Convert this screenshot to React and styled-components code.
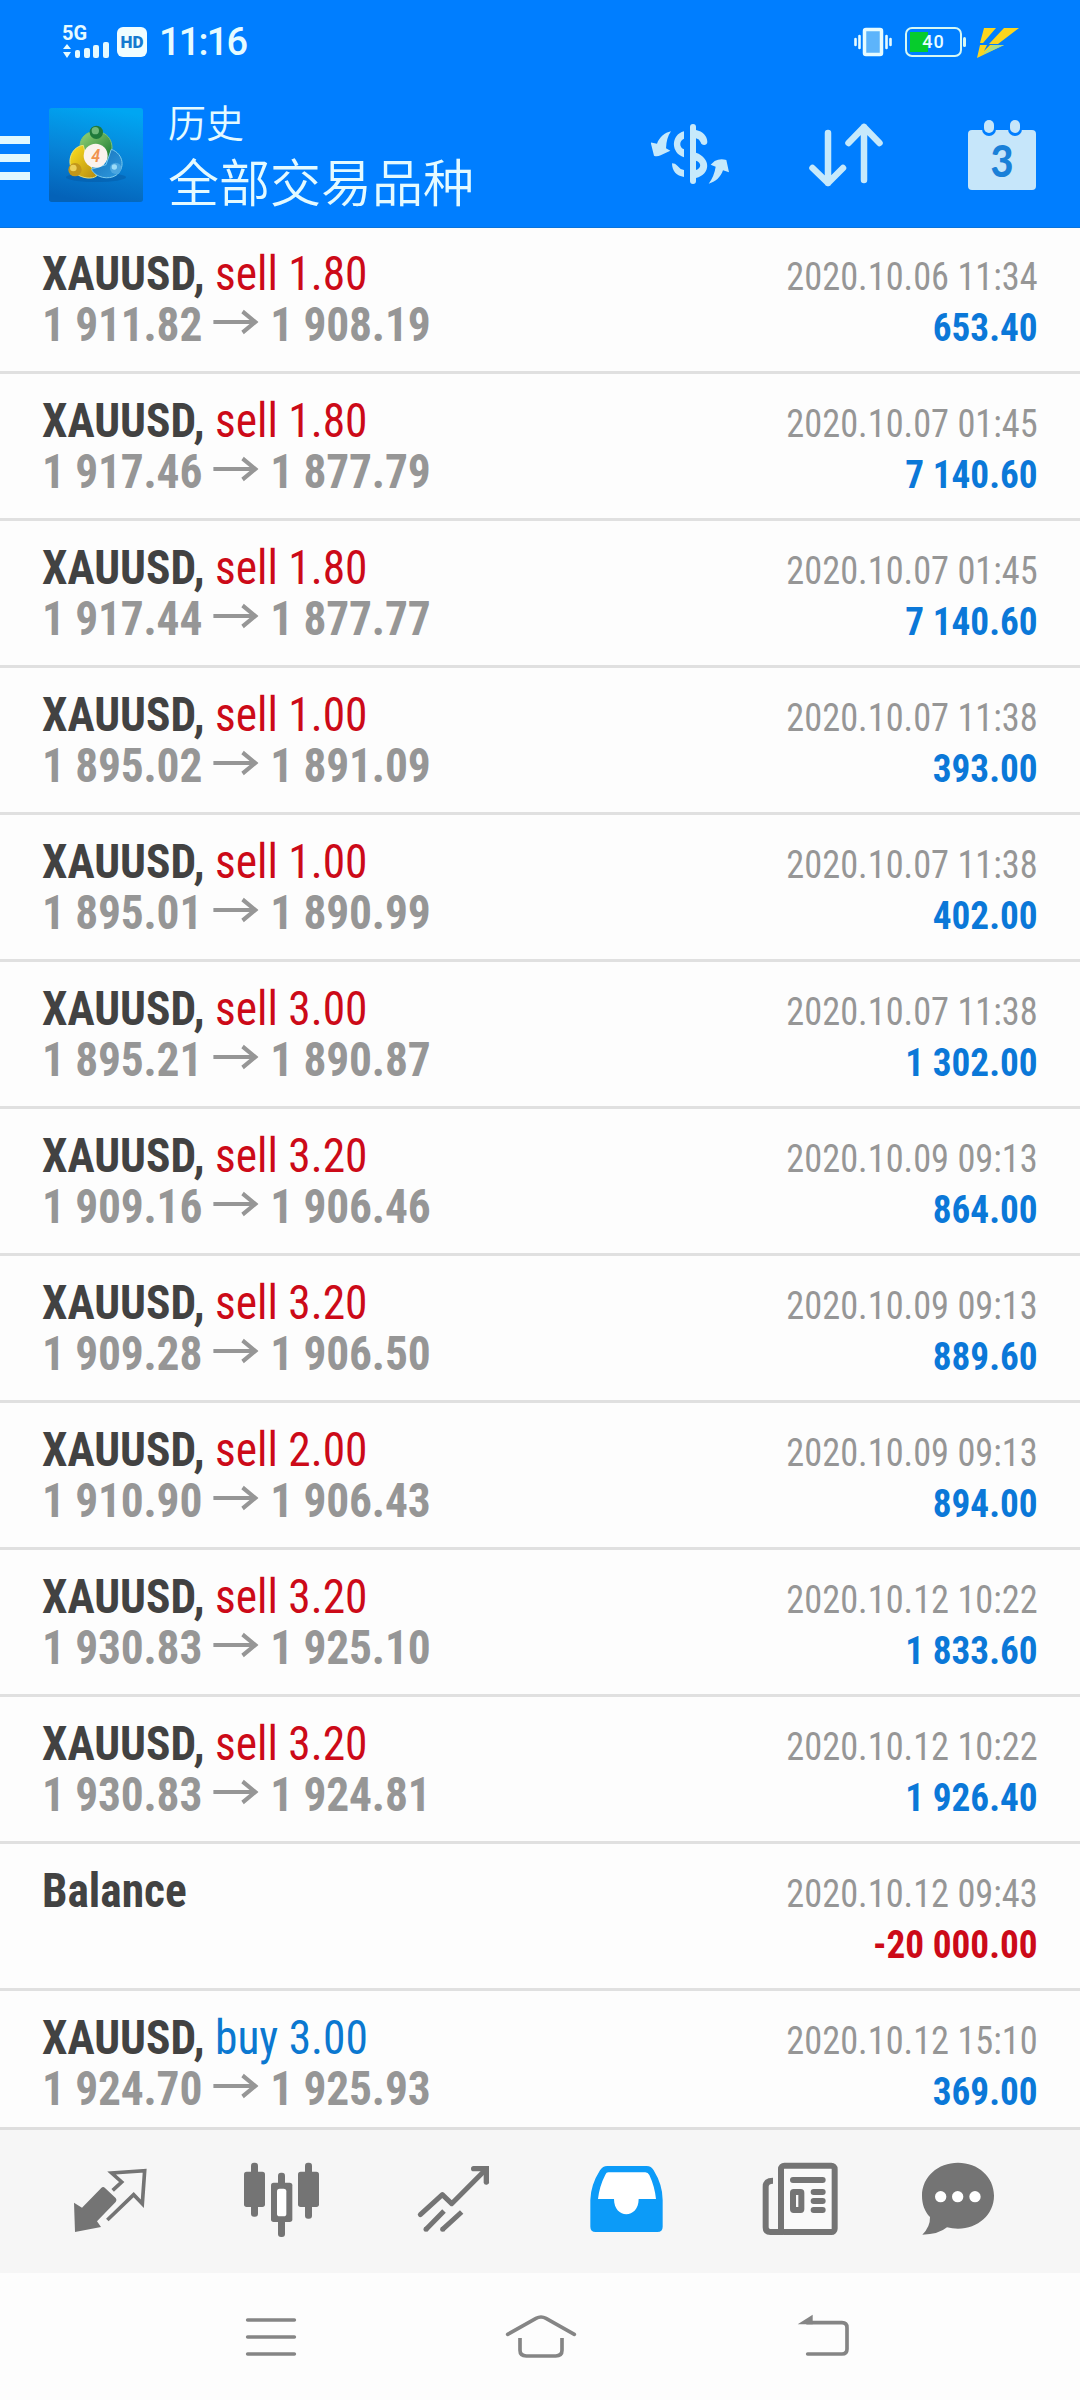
import React from 'react';
import styled, { createGlobalStyle } from 'styled-components';

const GlobalStyle = createGlobalStyle`
  * {
    box-sizing: border-box;
  }

  body {
    margin: 0;
    background: #fdfdfd;
    font-family: "Roboto Condensed", Roboto, "Noto Sans CJK SC", sans-serif;
    font-stretch: 75%;
  }

  svg {
    display: block;
    flex: none;
  }
`;

const Screen = styled.div`
  width: 1080px;
  height: 2400px;
  display: flex;
  flex-direction: column;
  overflow: hidden;
`;

const Header = styled.header`
  flex: none;
  height: 228px;
  background: #007eff;
  border-bottom: 1px solid #0a74dc;
`;

const StatusBar = styled.div`
  height: 84px;
  padding: 0 61px 0 62px;
  display: flex;
  align-items: center;
  justify-content: space-between;
`;

const StatusGroup = styled.div`
  display: flex;
  align-items: center;
`;

const Network = styled.div`
  width: 48px;
  height: 34px;
  margin-right: 7px;
  display: flex;
  flex-direction: column;
  color: #e6fbff;
  font: 700 20px/17px Roboto, sans-serif;
`;

const HdBadge = styled.div`
  width: 30px;
  height: 30px;
  border-radius: 6px;
  background: #f0fdff;
  color: #1579cf;
  font: 900 17px/30px Roboto, sans-serif;
  text-align: center;
`;

const Clock = styled.div`
  margin-left: 12px;
  color: #e6fbff;
  font: 500 38px/40px Roboto, sans-serif;
  letter-spacing: -1.8px;
`;

const TitleBar = styled.div`
  height: 143px;
  padding-right: 44px;
  display: flex;
  align-items: flex-start;
`;

const MenuButton = styled.div`
  width: 30px;
  margin: 52px 19px 0 0;
  display: grid;
  gap: 10px;
`;

const MenuLine = styled.span`
  height: 8px;
  background: #e0f8ff;
`;

const LogoBox = styled.div`
  margin: 24px 25px 0 0;
`;

const Titles = styled.div`
  flex: 1;
  padding-top: 11px;
  color: #e4faff;
  font-family: "Noto Sans CJK SC", sans-serif;
  font-weight: 350;
  white-space: nowrap;
`;

const Subtitle = styled.div`
  font-size: 38px;
  line-height: 52px;
`;

const Title = styled.div`
  font-size: 51px;
  line-height: 66px;
`;

const Actions = styled.div`
  padding-top: 35px;
  display: flex;
`;

const Action = styled.div`
  margin-left: ${({ $gap }) => $gap}px;
`;

const List = styled.main`
  flex: 1;
  min-height: 0;
  margin-top: -1px;
  overflow: hidden;
`;

const Row = styled.article`
  height: 147px;
  padding: 20px 42px 0;
  display: flex;
  justify-content: space-between;
  border-bottom: 3px solid #e0e0e0;
  white-space: nowrap;
`;

const Deal = styled.div`
  font-size: 48px;
  line-height: 51px;
  transform: scaleX(0.946);
  transform-origin: left;
`;

const Symbol = styled.div`
  height: 52px;
  line-height: 54px;
  color: #424242;
  font-weight: 700;
`;

const Side = styled.span`
  color: ${({ $buy }) => ($buy ? '#0b78d0' : '#cc0a18')};
  font-weight: 400;
`;

const Prices = styled.div`
  display: flex;
  color: #969696;
  font-weight: 700;
  letter-spacing: -0.15px;
`;

const Arrow = styled.span`
  width: 72px;
  padding-top: 10px;
  display: flex;
  justify-content: center;
`;

const Result = styled.div`
  padding-top: 5px;
  text-align: right;
  font-size: 39px;
  line-height: 51px;
`;

const Time = styled.div`
  color: #969696;
  transform: scaleX(0.932);
  transform-origin: right;
`;

const Profit = styled.div`
  color: ${({ $loss }) => ($loss ? '#cc0a18' : '#0b78d8')};
  font-weight: 700;
  transform: scaleX(0.955);
  transform-origin: right;
`;

const TabBar = styled.nav`
  flex: none;
  height: 146px;
  padding: 30px 48px 0 24px;
  display: flex;
  background: #f6f6f6;
  border-top: 3px solid #dedede;
`;

const Tab = styled.div`
  width: ${({ $last }) => ($last ? 148 : 172)}px;
  flex: none;
  display: flex;
  justify-content: center;
  color: ${({ $active }) => ($active ? '#0c9bf8' : '#747474')};
`;

const SystemNav = styled.nav`
  flex: none;
  height: 127px;
  padding: 32px 134px 0 136px;
  display: grid;
  grid-template-columns: repeat(3, 270px);
  justify-items: center;
  color: #858585;
`;

const deals = [
  { side: 'sell 1.80', open: '1 911.82', close: '1 908.19', time: '2020.10.06 11:34', profit: '653.40' },
  { side: 'sell 1.80', open: '1 917.46', close: '1 877.79', time: '2020.10.07 01:45', profit: '7 140.60' },
  { side: 'sell 1.80', open: '1 917.44', close: '1 877.77', time: '2020.10.07 01:45', profit: '7 140.60' },
  { side: 'sell 1.00', open: '1 895.02', close: '1 891.09', time: '2020.10.07 11:38', profit: '393.00' },
  { side: 'sell 1.00', open: '1 895.01', close: '1 890.99', time: '2020.10.07 11:38', profit: '402.00' },
  { side: 'sell 3.00', open: '1 895.21', close: '1 890.87', time: '2020.10.07 11:38', profit: '1 302.00' },
  { side: 'sell 3.20', open: '1 909.16', close: '1 906.46', time: '2020.10.09 09:13', profit: '864.00' },
  { side: 'sell 3.20', open: '1 909.28', close: '1 906.50', time: '2020.10.09 09:13', profit: '889.60' },
  { side: 'sell 2.00', open: '1 910.90', close: '1 906.43', time: '2020.10.09 09:13', profit: '894.00' },
  { side: 'sell 3.20', open: '1 930.83', close: '1 925.10', time: '2020.10.12 10:22', profit: '1 833.60' },
  { side: 'sell 3.20', open: '1 930.83', close: '1 924.81', time: '2020.10.12 10:22', profit: '1 926.40' },
  { time: '2020.10.12 09:43', profit: '-20 000.00' },
  { side: 'buy 3.00', open: '1 924.70', close: '1 925.93', time: '2020.10.12 15:10', profit: '369.00' },
];

const ArrowIcon = () => (
  <svg width="48" height="26" viewBox="0 0 48 26" fill="none" stroke="currentColor" strokeWidth="4.2">
    <path d="M0 13h45M31 2.500 44.500 13 31 23.500" />
  </svg>
);

const SignalIcon = () => (
  <svg width="48" height="17" viewBox="0 0 48 17" fill="#e6fbff">
    <path d="M1 7 5 2l4 5zM1 10h8l-4 6z" />
    <rect x="13" y="8" width="5" height="8" rx="2" />
    <rect x="22" y="6" width="6" height="10" rx="2" />
    <rect x="31" y="3" width="6" height="13" rx="2" />
    <rect x="41" y="0" width="6" height="16" rx="2" />
  </svg>
);

const VibrateIcon = () => (
  <svg width="38" height="30" viewBox="0 0 38 30">
    <rect x="10.5" y="2.500" width="17" height="25" rx="1.5" fill="#5db4fb" stroke="#e6fbff" strokeWidth="3.500" />
    <path d="M1.5 12v6M5.500 9v12M32.500 9v12M36.500 12v6" stroke="#e6fbff" strokeWidth="2.6" strokeLinecap="round" />
  </svg>
);

const Battery = styled.div`
  width: 57px;
  height: 30px;
  margin: 0 15px 0 13px;
  border: 2px solid #d6f8f4;
  border-radius: 7px;
  position: relative;
  background: linear-gradient(#06cc2c, #06cc2c) 3px 3px / 18px 20px no-repeat;
  color: #e8ffff;
  font: 500 18px/26px Roboto, sans-serif;
  letter-spacing: 1px;
  text-align: center;

  &::after {
    content: '';
    position: absolute;
    left: 56px;
    top: 8px;
    width: 3px;
    height: 10px;
    border-radius: 2px;
    background: #d6f8f4;
  }
`;

const BoltIcon = () => (
  <svg width="42" height="31" viewBox="0 0 42 31" fill="#fbd51e">
    <path d="M7 1h12L6 16H3zM27 1h15L21 17H12z" />
    <path d="M3 18h7l-3 6 6-6h14L0 31z" />
    <path d="M16 18h11L5 28z" fill="#a5dd8d" />
  </svg>
);

const LogoIcon = () => (
  <svg width="94" height="94" viewBox="57 54 282 282">
    <defs>
      <linearGradient id="tile" x1="0.6" y1="0" x2="0.4" y2="1">
        <stop offset="0" stopColor="#00a6f2" />
        <stop offset="0.5" stopColor="#0784d8" />
        <stop offset="1" stopColor="#0462b8" />
      </linearGradient>
      <linearGradient id="green" x1="0" y1="0" x2="1" y2="1">
        <stop offset="0" stopColor="#9ad67a" />
        <stop offset="1" stopColor="#16782f" />
      </linearGradient>
      <linearGradient id="gold" x1="0" y1="0" x2="1" y2="1">
        <stop offset="0" stopColor="#ffe21f" />
        <stop offset="1" stopColor="#b58a10" />
      </linearGradient>
      <linearGradient id="azure" x1="0" y1="0" x2="1" y2="1">
        <stop offset="0" stopColor="#1670b8" />
        <stop offset="1" stopColor="#2f9be0" />
      </linearGradient>
    </defs>
    <rect x="57" y="54" width="282" height="282" rx="8" fill="url(#tile)" />
    <ellipse cx="198" cy="262" rx="90" ry="14" fill="#054e96" opacity="0.35" />
    <path d="M150 170c0-62 96-62 96 4l-10 34h-70z" fill="url(#green)" stroke="#7cc472" strokeWidth="3" />
    <path d="M160 166c-40 4-54 60-24 84 22 16 50 18 64 8l-30-50z" fill="url(#gold)" stroke="#e8e27a" strokeWidth="3" />
    <path d="M244 178c38 14 42 58 14 78-22 14-60 8-74-18l44-14z" fill="url(#azure)" stroke="#7ccbee" strokeWidth="3" />
    <circle cx="199" cy="127" r="20" fill="#1f7a3a" />
    <circle cx="196" cy="122" r="11" fill="#6fb87a" />
    <circle cx="135" cy="239" r="20" fill="#c2961a" />
    <circle cx="130" cy="234" r="10" fill="#ecd05a" />
    <circle cx="257" cy="235" r="17" fill="#4ba6e0" />
    <circle cx="253" cy="231" r="8" fill="#9ddcf8" />
    <circle cx="197" cy="197" r="36" fill="#fbf3ee" />
    <text x="197" y="217" textAnchor="middle" fontFamily="Roboto" fontSize="56" fontStyle="italic" fontWeight="500" fill="#f0924e">4</text>
  </svg>
);

const CurrencyIcon = () => (
  <svg width="80" height="72" viewBox="33 27 240 216" fill="#c6e9fb">
    <path d="M93 64C74 68 58 82 51 101L32 97 42 137Q50 141 62 136L91 122 78 115Q79 84 93 64z" />
    <path d="M132 64C92 74 92 130 132 142V118C117 112 117 92 132 86z" />
    <path d="M96 160Q106 160 112 167 120 178 132 180V201C110 198 96 184 96 160z" />
    <rect x="150" y="42" width="18" height="180" rx="9" />
    <path d="M168 60C188 64 202 78 202 96 202 108 184 108 182 97Q178 87 168 85z" />
    <path d="M168 128C213 144 213 192 168 204V180C185 174 185 157 168 152z" />
    <path d="M206 221C226 216 242 202 249 181L267 187 259 150Q240 145 224 153L212 164 227 170Q223 198 206 221z" />
  </svg>
);

const SortIcon = () => (
  <svg width="74" height="72" viewBox="0 0 74 72" fill="none" stroke="#c6e9fb" strokeWidth="6.5" strokeLinecap="round" strokeLinejoin="round">
    <path d="M19 14v50M3.500 49 19 64 34 49M55 61V8M39.500 24 55 8l15.500 16" />
  </svg>
);

const CalendarIcon = () => (
  <svg width="68" height="72" viewBox="0 0 68 72">
    <rect y="11" width="68" height="60" rx="4" fill="#c6e6fa" />
    <rect x="14" y="-1" width="14" height="18" rx="7" fill="#007eff" />
    <rect x="40" y="-1" width="14" height="18" rx="7" fill="#007eff" />
    <rect x="16" y="1" width="10" height="13" rx="5" fill="#c6e6fa" />
    <rect x="42" y="1" width="10" height="13" rx="5" fill="#c6e6fa" />
    <text x="34" y="58" textAnchor="middle" fontFamily="Lato" fontSize="44" fontWeight="900" textLength="23" lengthAdjust="spacingAndGlyphs" fill="#1a80d8">3</text>
  </svg>
);

const QuotesIcon = () => (
  <svg width="80" height="80" viewBox="210 150 240 240" fill="currentColor">
    <path d="M303 235Q309 228 315 234L347 264Q352 270 347 276L291 334 303 351 225 366 222 278 246 293z" />
    <path d="M338 241 365 216 335 189 434 182 427 281 401 254 322 330" fill="none" stroke="currentColor" strokeWidth="11" />
  </svg>
);

const ChartsIcon = () => (
  <svg width="80" height="80" viewBox="726 150 240 240" fill="currentColor">
    <rect x="753" y="158" width="21" height="162" rx="9" />
    <rect x="732" y="185" width="63" height="106" rx="8" />
    <rect x="915" y="158" width="21" height="168" rx="9" />
    <rect x="894" y="185" width="63" height="106" rx="8" />
    <rect x="834" y="188" width="21" height="193" rx="9" />
    <rect x="813" y="218" width="64" height="118" rx="8" />
    <rect x="831" y="236" width="28" height="83" rx="8" fill="#fff" />
  </svg>
);

const TradeIcon = () => (
  <svg width="80" height="80" viewBox="162 150 240 240" fill="none" stroke="currentColor" strokeWidth="15">
    <path d="M181 314 247 254 275 281 375 181" strokeLinecap="round" strokeLinejoin="round" />
    <path d="M197 359 252 303M247 359 305 306" />
    <circle cx="198" cy="358" r="7.500" fill="currentColor" stroke="none" />
    <circle cx="248" cy="358" r="7.500" fill="currentColor" stroke="none" />
    <path d="M341 168h46v46a8 8 0 0 1-16 4v-34h-30a8 8 0 0 1 0-16z" fill="currentColor" stroke="none" />
  </svg>
);

const HistoryIcon = () => (
  <svg width="80" height="80" viewBox="678 150 240 240">
    <path d="M742 168H860Q874 168 881 181Q908 225 908 270V350Q908 366 892 366H707Q691 366 691 350V270Q692 225 720 181Q728 168 742 168z" fill="currentColor" />
    <path d="M745 187H856Q864 187 868 195Q884 229 888 267H836C836 328 762 328 762 267H714Q718 229 736 194Q739 187 745 187z" fill="#fff" />
  </svg>
);

const NewsIcon = () => (
  <svg width="80" height="80" viewBox="114 150 240 240" fill="none" stroke="currentColor" strokeWidth="18">
    <rect x="183" y="167" width="161" height="199" rx="10" fill="#fafafa" />
    <path d="M159 212Q137 212 137 230V352Q137 366 151 366H190" />
    <path d="M219 210H308M281 246H308M281 273H308M281 300H308" strokeLinecap="round" />
    <rect x="219" y="246" width="25" height="54" rx="2" />
  </svg>
);

const ChatIcon = () => (
  <svg width="80" height="80" viewBox="594 150 240 240">
    <path d="M714 158C774 158 822 200 822 257C822 313 774 356 714 356Q696 356 681 352Q655 374 607 374Q631 350 630 321C614 304 606 282 606 257C606 200 654 158 714 158z" fill="currentColor" />
    <circle cx="662" cy="260" r="17" fill="#fff" />
    <circle cx="713" cy="260" r="17" fill="#fff" />
    <circle cx="765" cy="260" r="17" fill="#fff" />
  </svg>
);

const RecentsIcon = () => (
  <svg width="80" height="60" viewBox="693 585 240 180" stroke="currentColor" strokeWidth="11" strokeLinecap="round">
    <path d="M743 630H883M743 681H883M743 732H883" />
  </svg>
);

const HomeIcon = () => (
  <svg width="80" height="60" viewBox="423 585 240 180" fill="none" stroke="currentColor" strokeWidth="11">
    <path d="M443 673 528 625Q543 617 558 625L643 673" strokeLinecap="round" />
    <path d="M480 684V721Q480 738 499 738H587Q606 738 606 721V684" />
  </svg>
);

const BackIcon = () => (
  <svg width="80" height="60" viewBox="153 585 240 180" fill="none" stroke="currentColor" strokeWidth="11">
    <path d="M262 638H366Q381 638 381 653V717Q381 732 366 732H263" strokeLinecap="round" />
    <path d="M233 643 278 614V643z" fill="currentColor" stroke="none" />
  </svg>
);

export default function App() {
  return (
    <Screen>
      <GlobalStyle />
      <Header>
        <StatusBar>
          <StatusGroup>
            <Network>
              5G
              <SignalIcon />
            </Network>
            <HdBadge>HD</HdBadge>
            <Clock>11:16</Clock>
          </StatusGroup>
          <StatusGroup>
            <VibrateIcon />
            <Battery>40</Battery>
            <BoltIcon />
          </StatusGroup>
        </StatusBar>
        <TitleBar>
          <MenuButton>
            <MenuLine />
            <MenuLine />
            <MenuLine />
          </MenuButton>
          <LogoBox>
            <LogoIcon />
          </LogoBox>
          <Titles>
            <Subtitle>历史</Subtitle>
            <Title>全部交易品种</Title>
          </Titles>
          <Actions>
            <Action $gap={0}><CurrencyIcon /></Action>
            <Action $gap={78}><SortIcon /></Action>
            <Action $gap={85}><CalendarIcon /></Action>
          </Actions>
        </TitleBar>
      </Header>

      <List>
        {deals.map((deal, i) => (
          <Row key={i}>
            <Deal>
              {deal.side ? (
                <>
                  <Symbol>
                    XAUUSD, <Side $buy={deal.side.startsWith('buy')}>{deal.side}</Side>
                  </Symbol>
                  <Prices>
                    {deal.open}
                    <Arrow><ArrowIcon /></Arrow>
                    {deal.close}
                  </Prices>
                </>
              ) : (
                <Symbol>Balance</Symbol>
              )}
            </Deal>
            <Result>
              <Time>{deal.time}</Time>
              <Profit $loss={deal.profit.startsWith('-')}>{deal.profit}</Profit>
            </Result>
          </Row>
        ))}
      </List>

      <TabBar>
        <Tab><QuotesIcon /></Tab>
        <Tab><ChartsIcon /></Tab>
        <Tab><TradeIcon /></Tab>
        <Tab $active><HistoryIcon /></Tab>
        <Tab><NewsIcon /></Tab>
        <Tab $last><ChatIcon /></Tab>
      </TabBar>

      <SystemNav>
        <RecentsIcon />
        <HomeIcon />
        <BackIcon />
      </SystemNav>
    </Screen>
  );
}
